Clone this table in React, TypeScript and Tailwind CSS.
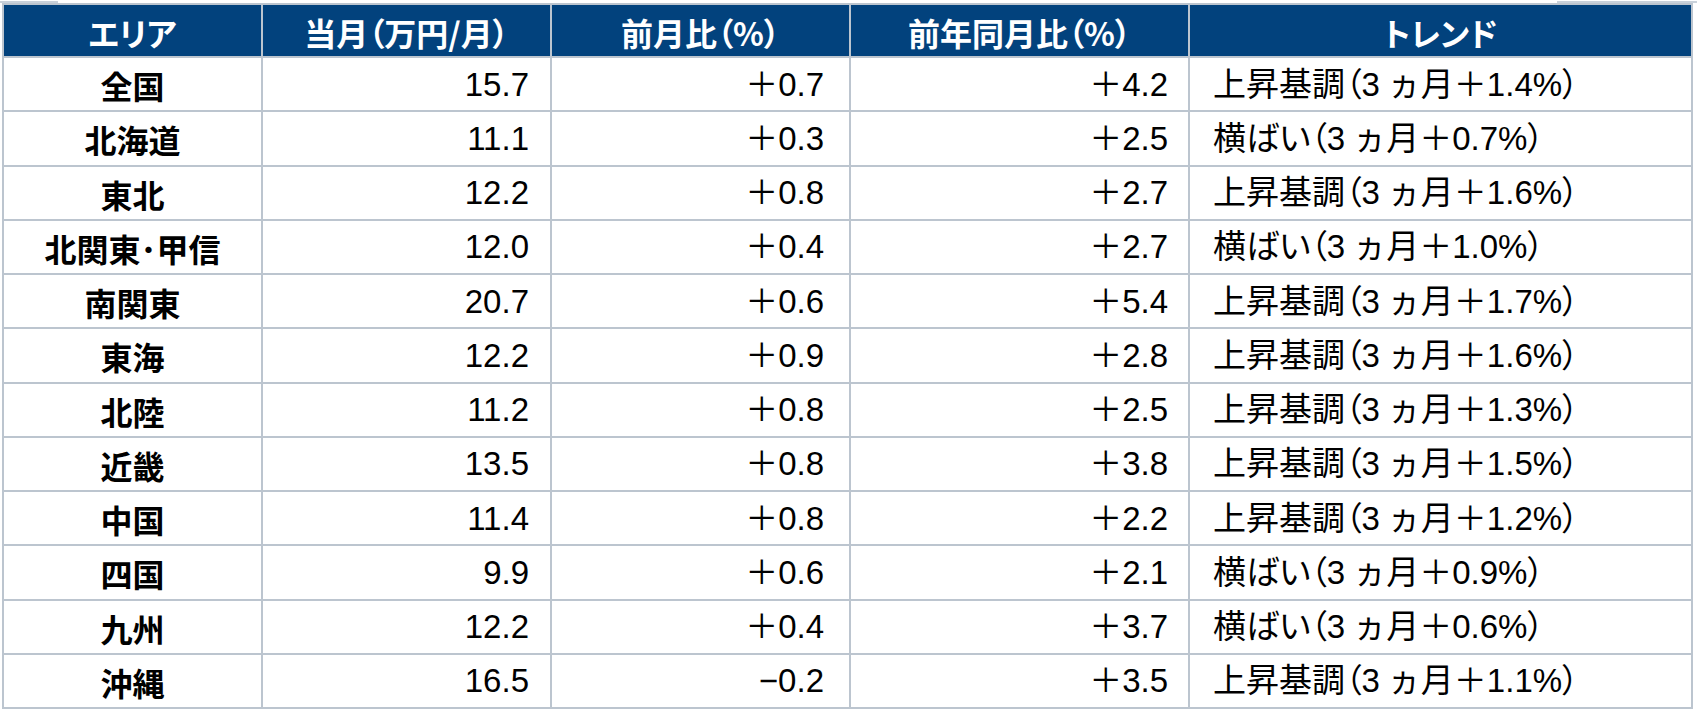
import React from "react";

const rows: [string, string, string, string, string, string][] = [
  ["全国", "15.7", "＋0.7", "＋4.2", "上昇基調", "1.4"],
  ["北海道", "11.1", "＋0.3", "＋2.5", "横ばい", "0.7"],
  ["東北", "12.2", "＋0.8", "＋2.7", "上昇基調", "1.6"],
  ["北関東･甲信", "12.0", "＋0.4", "＋2.7", "横ばい", "1.0"],
  ["南関東", "20.7", "＋0.6", "＋5.4", "上昇基調", "1.7"],
  ["東海", "12.2", "＋0.9", "＋2.8", "上昇基調", "1.6"],
  ["北陸", "11.2", "＋0.8", "＋2.5", "上昇基調", "1.3"],
  ["近畿", "13.5", "＋0.8", "＋3.8", "上昇基調", "1.5"],
  ["中国", "11.4", "＋0.8", "＋2.2", "上昇基調", "1.2"],
  ["四国", "9.9", "＋0.6", "＋2.1", "横ばい", "0.9"],
  ["九州", "12.2", "＋0.4", "＋3.7", "横ばい", "0.6"],
  ["沖縄", "16.5", "−0.2", "＋3.5", "上昇基調", "1.1"],
];

const headers = ["エリア", "当月（万円/月）", "前月比（%）", "前年同月比（%）", "トレンド"];

export default function App() {
  return (
    <div className="w-[1697px] h-[712px] bg-white overflow-hidden">
      <div className="flex h-[3px] items-start">
        <div className="w-[58px] h-[2px] mt-[1px] bg-[#c9d1da]" />
        <div className="flex-1" />
        <div className="w-[140px] h-[2px] mt-[1px] bg-[#c9d1da]" />
      </div>
      <div className="ml-[2px] w-[1691px] h-[706px] grid grid-cols-[257px_287px_297px_337px_501px] grid-rows-[51px_repeat(12,1fr)] gap-[2px] p-[2px] bg-[#bcc5cf]">
        {headers.map((h) => (
          <div
            key={h}
            className="bg-[#02427d] text-white flex items-center justify-center font-['Noto_Sans_CJK_JP',sans-serif] font-bold text-[32px] leading-none [font-feature-settings:'palt'] pt-[2px]"
          >
            {h}
          </div>
        ))}
        {rows.map((r) => (
          <React.Fragment key={r[0]}>
            <div className="bg-white flex items-center justify-center font-['Noto_Sans_CJK_JP',sans-serif] font-bold text-[32px] leading-none text-black pt-[2px]">
              {r[0]}
            </div>
            <div className="bg-white flex items-center justify-end pr-[21px] font-['Liberation_Sans','Noto_Sans_CJK_JP',sans-serif] text-[33px] leading-none text-black">
              {r[1]}
            </div>
            <div className="bg-white flex items-center justify-end pr-[25px] font-['Liberation_Sans','Noto_Sans_CJK_JP',sans-serif] text-[33px] leading-none text-black">
              {r[2]}
            </div>
            <div className="bg-white flex items-center justify-end pr-[20px] font-['Liberation_Sans','Noto_Sans_CJK_JP',sans-serif] text-[33px] leading-none text-black">
              {r[3]}
            </div>
            <div className="bg-white flex items-center justify-start pl-[23px] font-['Liberation_Sans','Noto_Sans_CJK_JP',sans-serif] text-[33px] leading-none text-black whitespace-nowrap">
              <span className="[font-feature-settings:'palt']">{r[4]}（3</span>
              <span className="ml-[8px] [font-feature-settings:normal]">ヵ月＋</span>
              <span className="[font-feature-settings:'palt']">{r[5]}%）</span>
            </div>
          </React.Fragment>
        ))}
      </div>
    </div>
  );
}
